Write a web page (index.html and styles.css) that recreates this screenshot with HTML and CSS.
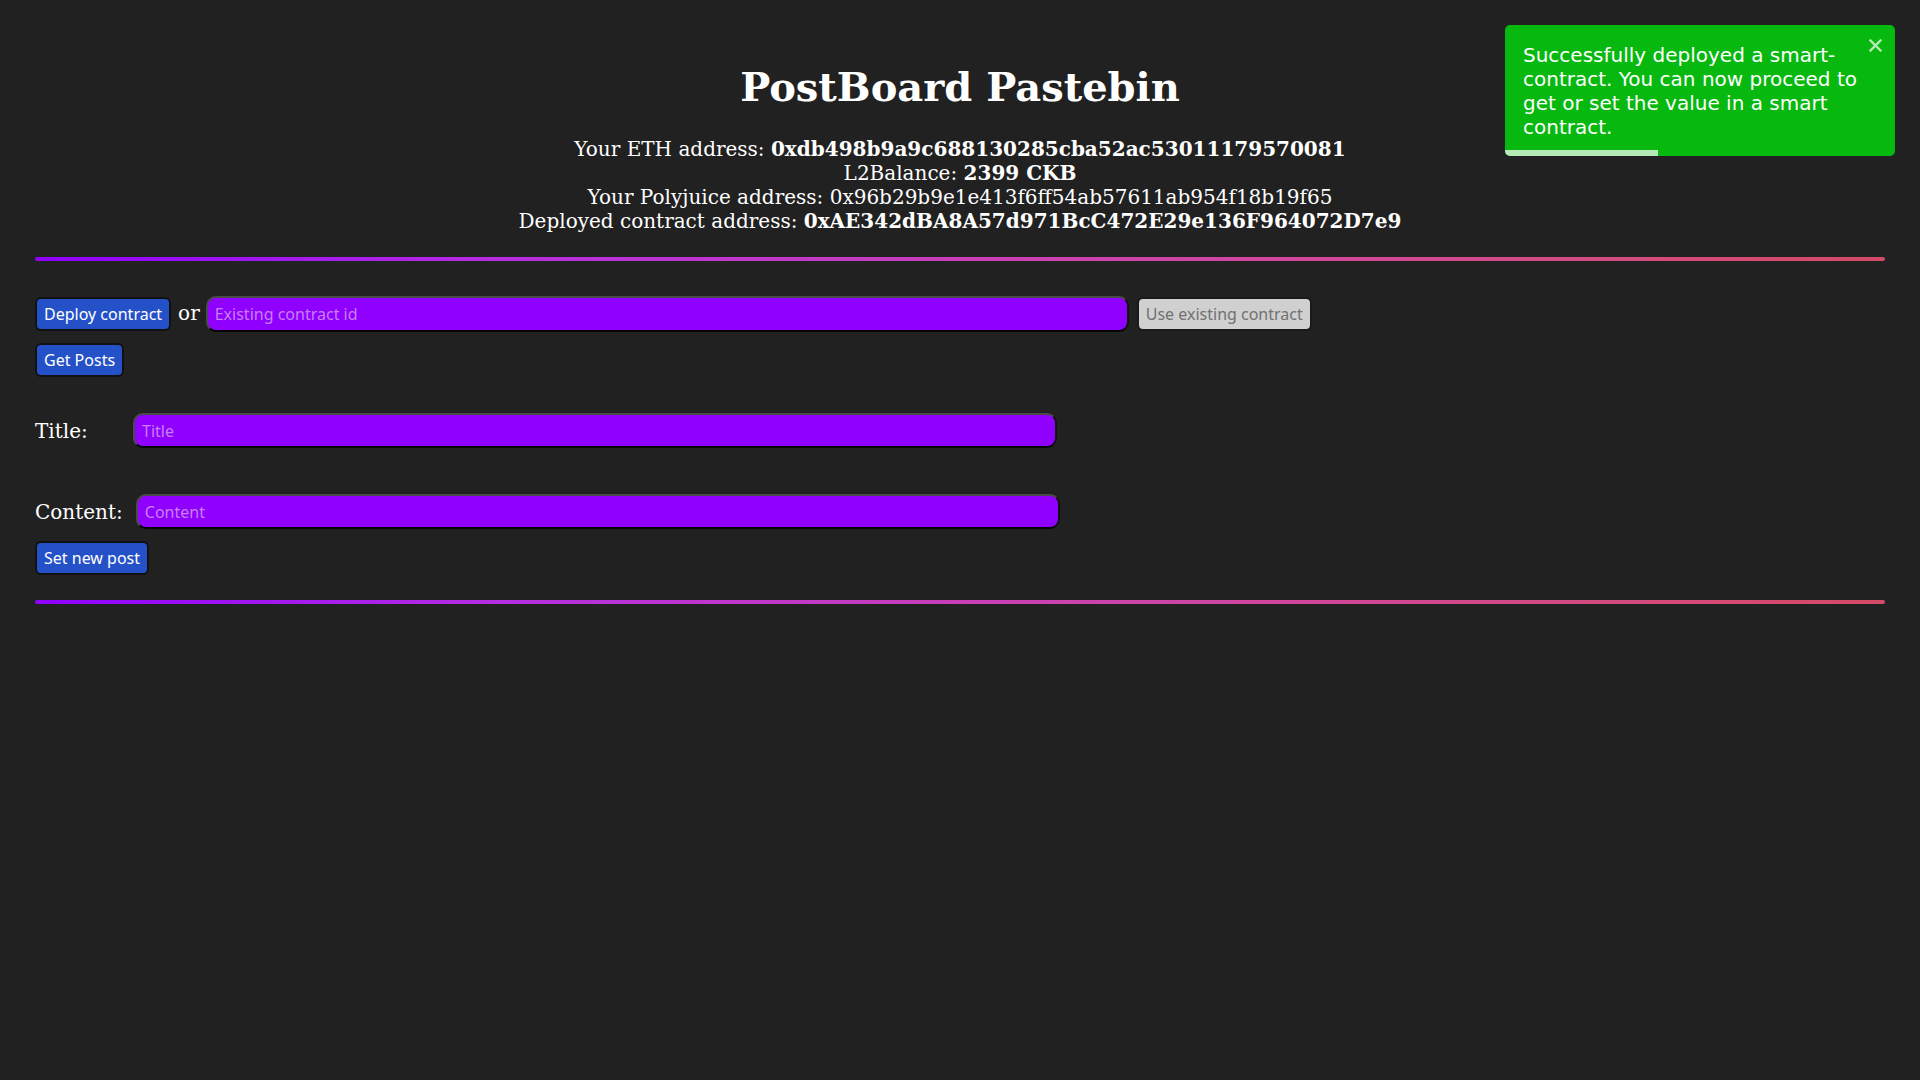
FILE: index.html
```html
<!DOCTYPE html>
<html lang="en">
<head>
<meta charset="utf-8">
<title>PostBoard Pastebin</title>
<link rel="stylesheet" href="styles.css">
</head>
<body>
<div class="app">
  <h1 class="title">PostBoard Pastebin</h1>
  <div class="info">
    <div>Your ETH address: <b>0xdb498b9a9c688130285cba52ac53011179570081</b></div>
    <div>L2Balance: <b>2399 CKB</b></div>
    <div>Your Polyjuice address: 0x96b29b9e1e413f6ff54ab57611ab954f18b19f65</div>
    <div>Deployed contract address: <b>0xAE342dBA8A57d971BcC472E29e136F964072D7e9</b></div>
  </div>
  <hr class="divider">
  <div class="row row-deploy">
    <button class="btn btn-primary">Deploy contract</button>
    <span class="or">or</span>
    <input class="field field-existing" placeholder="Existing contract id">
    <button class="btn btn-disabled">Use existing contract</button>
  </div>
  <div class="row row-get">
    <button class="btn btn-primary">Get Posts</button>
  </div>
  <div class="row row-title">
    <label class="field-label label-title">Title:</label>
    <input class="field" placeholder="Title">
  </div>
  <div class="row row-content">
    <label class="field-label">Content:</label>
    <input class="field" placeholder="Content">
  </div>
  <div class="row row-set">
    <button class="btn btn-primary">Set new post</button>
  </div>
  <hr class="divider divider-bottom">
</div>

<div class="toast">
  <div class="toast-body">Successfully deployed a smart-contract. You can now proceed to get or set the value in a smart contract.</div>
  <button class="toast-close" aria-label="close">
    <svg width="13" height="13" viewBox="0 0 13 13"><path d="M1.5 1.5 L11.5 11.5 M11.5 1.5 L1.5 11.5" stroke="currentColor" stroke-width="2.4" stroke-linecap="square"/></svg>
  </button>
  <div class="toast-progress"></div>
</div>
</body>
</html>
```

FILE: styles.css
```css
html, body {
  margin: 0;
  padding: 0;
}
body {
  background: #212121;
  color: #ffffff;
  font-family: "DejaVu Serif", serif;
  min-height: 1080px;
}
.app {
  padding: 0 35px;
}
.title {
  margin: 63px 0 26px;
  font-size: 40px;
  line-height: 48px;
  font-weight: bold;
  text-align: center;
}
.info {
  text-align: center;
  font-size: 20px;
  line-height: 24px;
}
.info b {
  font-weight: bold;
}
.divider {
  margin: 24px 0 0;
  height: 4px;
  border: 0;
  border-radius: 2px;
  background: linear-gradient(90deg, #8f00ff 0%, #b52ee0 25%, #cc42b0 55%, #d34a88 80%, #d44b66 100%);
}
.divider-bottom {
  margin-top: 25px;
}
.row {
  display: flex;
  align-items: center;
}
.row-deploy {
  margin-top: 35px;
  height: 36px;
}
.row-get {
  margin-top: 11px;
}
.row-title {
  margin-top: 36px;
}
.row-content {
  margin-top: 46px;
}
.row-set {
  margin-top: 12px;
}
.btn {
  box-sizing: border-box;
  height: 34px;
  padding: 0 7px;
  border: 2px solid #111111;
  border-radius: 6px;
  font-family: "Noto Sans", sans-serif;
  font-size: 16px;
  line-height: 28px;
  cursor: pointer;
}
.btn-primary {
  background: #2451c8;
  color: #ffffff;
}
.btn-disabled {
  background: #d0d0d0;
  color: #717171;
  border-color: #1a1a1a;
  margin-left: 8px;
}
.or {
  font-size: 20px;
  margin: 0 6px 0 7px;
  position: relative;
  top: -1px;
}
.field {
  box-sizing: border-box;
  width: 924px;
  height: 35px;
  padding: 0 7px;
  background: #8f00ff;
  border: 2px solid;
  border-color: #4a4a4a #111111 #050505 #4a4a4a;
  border-radius: 10px;
  color: #ffffff;
  font-family: "Noto Sans", sans-serif;
  font-size: 16px;
  outline: none;
}
.field-existing {
  height: 36px;
  width: 923px;
}
.field::placeholder {
  color: #c77ef6;
}
.field-label {
  font-size: 20px;
  line-height: 24px;
  margin-right: 13px;
}
.label-title {
  min-width: 85px;
}
.toast {
  position: fixed;
  top: 25px;
  right: 25px;
  width: 390px;
  height: 131px;
  box-sizing: border-box;
  padding: 18px 13px 16px 18px;
  background: #07b90e;
  border-radius: 5px;
  color: #ffffff;
  font-family: "DejaVu Sans", sans-serif;
  font-size: 20px;
  line-height: 24px;
  display: flex;
  align-items: flex-start;
  overflow: hidden;
}
.toast-body {
  flex: 1;
  min-width: 0;
}
.toast-close {
  flex: none;
  margin: -4px 0 0 6px;
  padding: 0;
  width: 13px;
  height: 13px;
  background: none;
  border: 0;
  color: rgba(255, 255, 255, 0.7);
  display: flex;
}
.toast-progress {
  position: absolute;
  left: 0;
  bottom: 0;
  width: 153px;
  height: 6px;
  background: rgba(255, 255, 255, 0.7);
}
```
